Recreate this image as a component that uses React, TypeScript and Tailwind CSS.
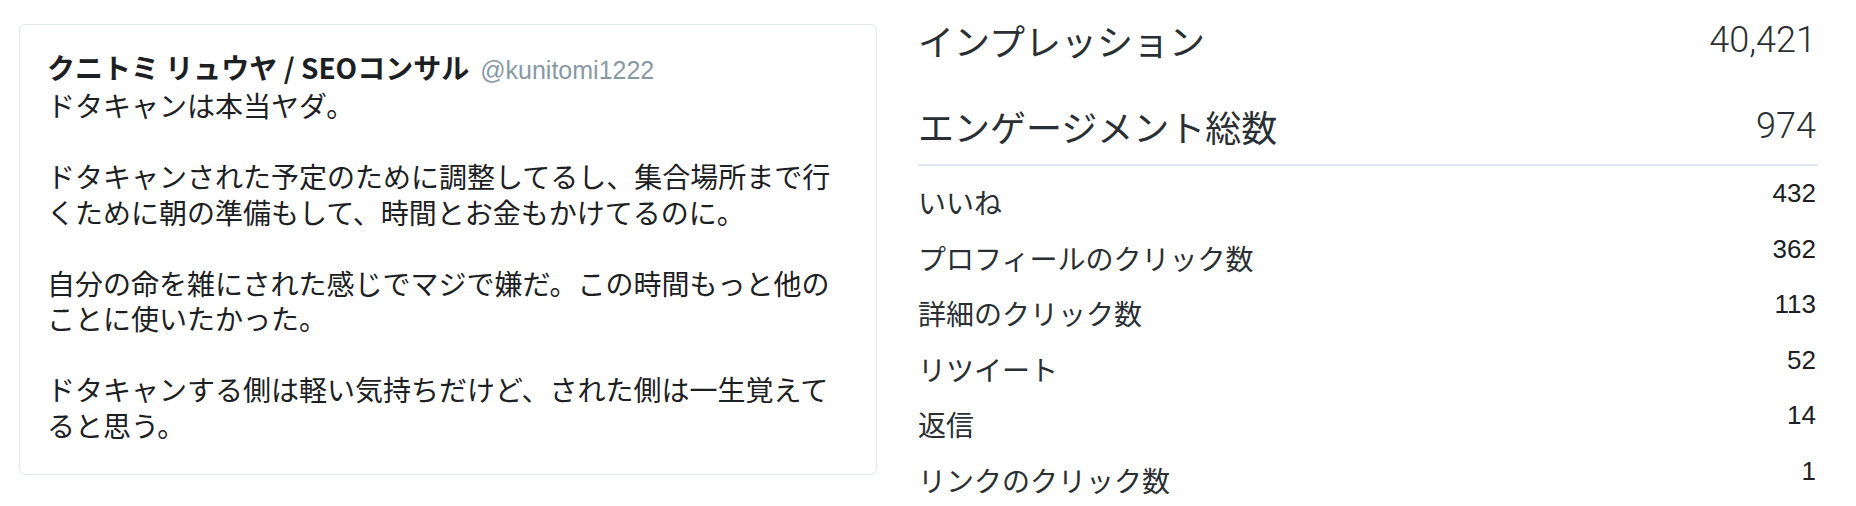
const jp = { fontFamily: "'Noto Sans CJK JP', 'Noto Sans', sans-serif" };
const num = { fontFamily: "'Liberation Sans', Arial, sans-serif" };
const numLight = { fontFamily: "Roboto, 'Liberation Sans', sans-serif" };

const tweetLines = [
  ['ドタキャンは本当ヤダ。'],
  ['ドタキャンされた予定のために調整してるし、集合場所まで行', 'くために朝の準備もして、時間とお金もかけてるのに。'],
  ['自分の命を雑にされた感じでマジで嫌だ。この時間もっと他の', 'ことに使いたかった。'],
  ['ドタキャンする側は軽い気持ちだけど、された側は一生覚えて', 'ると思う。'],
];

const metrics = [
  { label: 'いいね', value: '432' },
  { label: 'プロフィールのクリック数', value: '362' },
  { label: '詳細のクリック数', value: '113' },
  { label: 'リツイート', value: '52' },
  { label: '返信', value: '14' },
  { label: 'リンクのクリック数', value: '1' },
];

export default function App() {
  return (
    <div className="w-[1856px] h-[506px] bg-white overflow-hidden flex items-start" style={jp}>
      {/* tweet card */}
      <div className="ml-[19px] mt-[24px] w-[858px] h-[451px] border border-[#e1e8ed] rounded-[6px] pl-[27px] pr-[27px] pt-[24px] text-[#1c2022]">
        <div className="h-[36px] leading-[36px] whitespace-nowrap flex items-baseline">
          <span className="text-[28px] font-bold">クニトミ リュウヤ / SEOコンサル</span>
          <span className="ml-[11px] text-[25px] text-[#8899a6]" style={num}>@kunitomi1222</span>
        </div>
        <div className="text-[28px] leading-[35.5px] flex flex-col gap-[35.5px] mt-[3px]">
          {tweetLines.map((para, i) => (
            <p key={i}>
              {para.map((line, j) => (
                <span key={j} className="block whitespace-nowrap">{line}</span>
              ))}
            </p>
          ))}
        </div>
      </div>

      {/* metrics */}
      <div className="ml-[41px] w-[900px] pt-[18px] text-[#292f33]">
        <div className="flex justify-between items-center h-[44px]">
          <span className="text-[36px] leading-[44px]">インプレッション</span>
          <span className="text-[36px] font-light leading-[44px] pr-[2px]" style={numLight}>40,421</span>
        </div>
        <div className="flex justify-between items-center h-[44px] mt-[42px]">
          <span className="text-[36px] leading-[44px]">エンゲージメント総数</span>
          <span className="text-[36px] font-light leading-[44px] pr-[2px]" style={numLight}>974</span>
        </div>
        <div className="h-[2px] bg-[#e1e8ed] mt-[16px]" />
        <div className="mt-[9px]">
          {metrics.map((m) => (
            <div key={m.label} className="flex justify-between items-start h-[55.6px]">
              <span className="text-[28px] leading-[55.6px]">{m.label}</span>
              <span className="text-[26px] leading-[37px] pr-[2px] text-[#1c2022]" style={num}>{m.value}</span>
            </div>
          ))}
        </div>
      </div>
    </div>
  );
}
